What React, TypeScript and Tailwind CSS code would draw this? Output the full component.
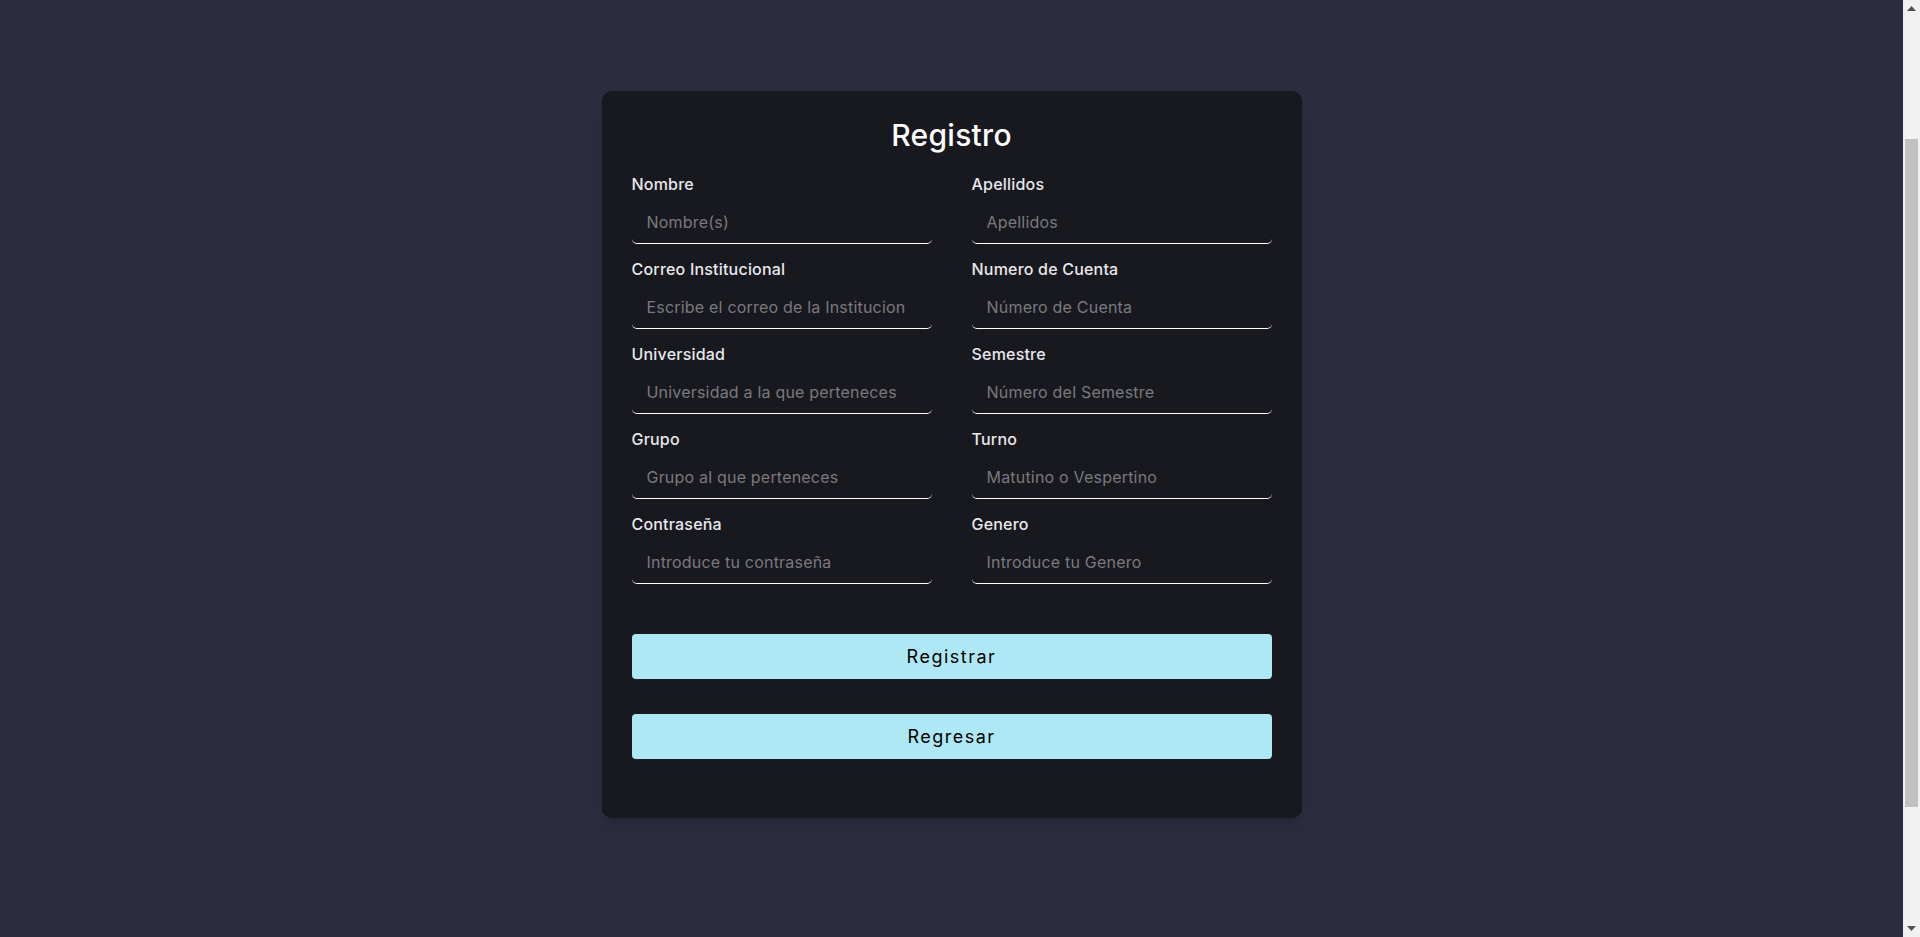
const fields = [
  { label: "Nombre", placeholder: "Nombre(s)", type: "text" },
  { label: "Apellidos", placeholder: "Apellidos", type: "text" },
  { label: "Correo Institucional", placeholder: "Escribe el correo de la Institucion", type: "email" },
  { label: "Numero de Cuenta", placeholder: "Número de Cuenta", type: "text" },
  { label: "Universidad", placeholder: "Universidad a la que perteneces", type: "text" },
  { label: "Semestre", placeholder: "Número del Semestre", type: "text" },
  { label: "Grupo", placeholder: "Grupo al que perteneces", type: "text" },
  { label: "Turno", placeholder: "Matutino o Vespertino", type: "text" },
  { label: "Contraseña", placeholder: "Introduce tu contraseña", type: "password" },
  { label: "Genero", placeholder: "Introduce tu Genero", type: "text" },
];

function Scrollbar() {
  return (
    <aside className="flex w-[17px] flex-col bg-[#f1f1f1]">
      <div className="flex h-[17px] items-center justify-center">
        <svg width="9" height="5" viewBox="0 0 9 5">
          <path d="M0 5 L4.5 0 L9 5 Z" fill="#505050" />
        </svg>
      </div>
      <div className="flex-1 px-[2px] pt-[122px]">
        <div className="h-[668px] w-full bg-[#c1c1c1]" />
      </div>
      <div className="flex h-[17px] items-center justify-center">
        <svg width="9" height="5" viewBox="0 0 9 5">
          <path d="M0 0 L9 0 L4.5 5 Z" fill="#505050" />
        </svg>
      </div>
    </aside>
  );
}

export default function App() {
  return (
    <div className="flex h-[937px] overflow-hidden bg-[#2b2c3d] font-['Inter','Noto_Sans',sans-serif]">
      <main className="flex-1 pt-[91px]">
        {/* Card */}
        <div className="mx-auto w-[700px] rounded-[10px] bg-[#18181f] px-[30px] pt-[26px] pb-[59px] shadow-lg">
          <h1 className="text-center text-[30px] leading-[36px] font-medium tracking-[0.3px] text-white">Registro</h1>

          <form className="mt-[19px]" onSubmit={(e) => e.preventDefault()}>
            <div className="grid grid-cols-2 gap-x-[40px] gap-y-[13px]">
              {fields.map((f) => (
                <div key={f.label} className="flex flex-col">
                  <label className="text-[16px] leading-[24px] font-medium tracking-[0.2px] text-[#e8e8ec]">
                    {f.label}
                  </label>
                  <input
                    type={f.type}
                    placeholder={f.placeholder}
                    className="mt-[4px] h-[44px] w-full rounded-[5px] border-b border-white bg-transparent px-[15px] text-[16px] tracking-[0.2px] text-white outline-none placeholder:text-[#7a7a7e]"
                  />
                </div>
              ))}
            </div>

            <button
              type="submit"
              className="mt-[50px] h-[45px] w-full rounded-[4px] bg-[#ade8f4] text-[18px] tracking-[1.5px] text-black"
            >
              Registrar
            </button>
            <button
              type="button"
              className="mt-[35px] h-[45px] w-full rounded-[4px] bg-[#ade8f4] text-[18px] tracking-[1.5px] text-black"
            >
              Regresar
            </button>
          </form>
        </div>
      </main>
      <Scrollbar />
    </div>
  );
}
